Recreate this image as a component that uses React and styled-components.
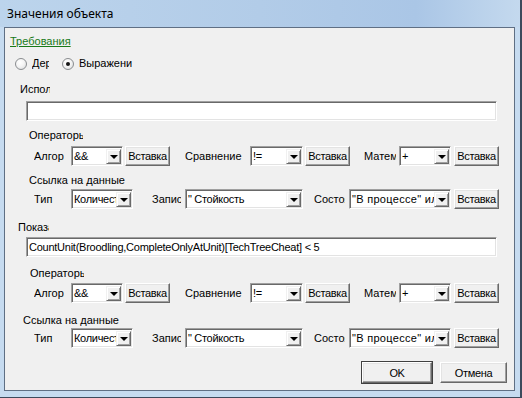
import React from "react";
import styled, { createGlobalStyle, css } from "styled-components";

const GlobalStyle = createGlobalStyle`
  html, body { margin: 0; padding: 0; background: #ffffff; }
  body {
    width: 522px; height: 398px; overflow: hidden;
    font-family: "Liberation Sans", Arial, sans-serif;
    font-size: 11px; color: #000;
  }
  * { box-sizing: border-box; }
`;

const Window = styled.div`
  width: 522px;
  height: 398px;
  display: flex;
  flex-direction: column;
  background: linear-gradient(90deg, #bcd4ec 0%, #b2cce8 50%, #aac6e6 80%, #c4d9ee 100%);
  border-right: 2px solid #3c4a5c;
  border-bottom: 1px solid #3c4a5c;
`;

const TitleBar = styled.div`
  height: 27px;
  flex: none;
  display: flex;
  align-items: center;
  padding-left: 7px;
  font-family: "Noto Sans", "Open Sans", sans-serif;
  font-size: 12px;
  color: #000;
`;

const FrameBody = styled.div`
  flex: 1;
  display: flex;
  padding: 0 5px 6px 4px;
  background: #c6dbf0;
`;

const Client = styled.div`
  flex: 1;
  background: #f0f0f0;
  border: 1px solid #5f6f84;
  display: flex;
  flex-direction: column;
`;

const Link = styled.a`
  align-self: flex-start;
  margin: 7px 0 0 5px;
  line-height: 13px;
  color: #187a18;
  text-decoration: underline;
  cursor: pointer;
`;

const RadioRow = styled.div`
  display: flex;
  align-items: center;
  height: 13px;
  margin: 9px 0 0 10px;
`;

const RadioOption = styled.label`
  display: flex;
  align-items: center;
  margin-right: ${(p) => p.$mr || 0}px;
`;

const RadioCircle = styled.span`
  width: 12px;
  height: 12px;
  border-radius: 50%;
  border: 1px solid #8a8d90;
  background: radial-gradient(circle at 40% 35%, #ffffff 0%, #f4f4f4 45%, #d6d8da 100%);
  display: flex;
  align-items: center;
  justify-content: center;
  margin-right: 5px;
  flex: none;
  ${(p) =>
    p.$checked &&
    css`
      &::after {
        content: "";
        width: 4px;
        height: 4px;
        border-radius: 50%;
        background: #151515;
      }
    `}
`;

const Clip = styled.span`
  display: block;
  width: ${(p) => p.$w}px;
  overflow: hidden;
  white-space: nowrap;
  line-height: 13px;
  flex: none;
`;

const SectionLabel = styled(Clip)`
  margin: ${(p) => p.$mt}px 0 0 ${(p) => p.$ml}px;
`;

const TextBox = styled.div`
  margin: ${(p) => p.$mt}px 0 0 21px;
  width: 471px;
  height: 20px;
  background: #fff;
  border-top: 1px solid #a0a0a0;
  border-left: 1px solid #a0a0a0;
  border-right: 1px solid #ffffff;
  border-bottom: 1px solid #ffffff;
  box-shadow: inset 1px 1px 0 #696969, inset -1px -1px 0 #e3e3e3;
  padding: 0 0 0 2px;
  display: flex;
  align-items: center;
  white-space: nowrap;
  overflow: hidden;
  letter-spacing: -0.25px;
`;

const Row = styled.div`
  display: flex;
  align-items: center;
  height: 20px;
  margin: ${(p) => p.$mt}px 0 0 29px;
`;

const RowLabel = styled(Clip)`
  margin-left: ${(p) => p.$ml || 0}px;
  margin-right: ${(p) => p.$mr}px;
`;

const Combo = styled.div`
  width: ${(p) => p.$w}px;
  height: 20px;
  flex: none;
  display: flex;
  background: #fff;
  border-top: 1px solid #a0a0a0;
  border-left: 1px solid #a0a0a0;
  border-right: 1px solid #ffffff;
  border-bottom: 1px solid #ffffff;
  box-shadow: inset 1px 1px 0 #696969, inset -1px -1px 0 #e3e3e3;
  padding: 2px 1px 1px 1px;
`;

const ComboText = styled.span`
  flex: 1;
  min-width: 0;
  overflow: hidden;
  white-space: nowrap;
  padding-left: 1px;
  line-height: 15px;
  letter-spacing: ${(p) => (p.$ls !== undefined ? p.$ls : -0.3)}px;
`;

const ComboButton = styled.span`
  width: 15px;
  flex: none;
  background: #f0f0f0;
  border-top: 1px solid #f0f0f0;
  border-left: 1px solid #f0f0f0;
  border-right: 1px solid #696969;
  border-bottom: 1px solid #696969;
  box-shadow: inset 1px 1px 0 #ffffff, inset -1px -1px 0 #a0a0a0;
  display: flex;
  align-items: center;
  justify-content: center;
  &::after {
    content: "";
    width: 0;
    height: 0;
    border-left: 4px solid transparent;
    border-right: 4px solid transparent;
    border-top: 4px solid #000;
    margin-top: 1px;
  }
`;

const Button = styled.button`
  width: ${(p) => p.$w || 45}px;
  height: ${(p) => p.$h || 20}px;
  margin-left: ${(p) => p.$ml || 0}px;
  flex: none;
  padding: 0;
  overflow: hidden;
  white-space: nowrap;
  font-family: "Liberation Sans", Arial, sans-serif;
  font-size: 11px;
  letter-spacing: -0.35px;
  color: #000;
  background: #f0f0f0;
  border-top: 1px solid #ffffff;
  border-left: 1px solid #ffffff;
  border-right: 1px solid #696969;
  border-bottom: 1px solid #696969;
  box-shadow: inset -1px -1px 0 #a0a0a0, inset 1px 1px 0 #e3e3e3;
  ${(p) =>
    p.$default &&
    css`
      outline: 1px solid #404040;
      outline-offset: 0;
    `}
`;

const Footer = styled.div`
  display: flex;
  justify-content: flex-end;
  gap: 8px;
  margin: 14px 7px 0 0;
`;

function ComboBox({ w, value, ls }) {
  return (
    <Combo $w={w}>
      <ComboText $ls={ls}>{value}</ComboText>
      <ComboButton />
    </Combo>
  );
}

function OperatorRow({ mt }) {
  return (
    <Row $mt={mt}>
      <RowLabel $w={30} $mr={7}>Алгоритм</RowLabel>
      <ComboBox w={52} value="&&" />
      <Button $ml={2}>Вставка</Button>
      <RowLabel $w={62} $ml={15} $mr={3}>Сравнение</RowLabel>
      <ComboBox w={53} value="!=" />
      <Button $ml={2}>Вставка</Button>
      <RowLabel $w={32} $ml={14} $mr={3}>Математика</RowLabel>
      <ComboBox w={52} value="+" />
      <Button $ml={3}>Вставка</Button>
    </Row>
  );
}

function DataRow({ mt }) {
  return (
    <Row $mt={mt}>
      <RowLabel $w={31} $mr={6}>Тип</RowLabel>
      <ComboBox w={62} value="Количество" />
      <RowLabel $w={29} $ml={19} $mr={4}>Запись</RowLabel>
      <ComboBox w={118} value={'" Стойкость'} />
      <RowLabel $w={31} $ml={11} $mr={4}>Состояние</RowLabel>
      <ComboBox w={102} ls={0.3} value={'"В процессе" или "Завершено"'} />
      <Button $ml={3}>Вставка</Button>
    </Row>
  );
}

export default function App() {
  return (
    <>
      <GlobalStyle />
      <Window>
        <TitleBar>Значения объекта</TitleBar>
        <FrameBody>
          <Client>
            <Link>Требования</Link>
            <RadioRow>
              <RadioOption $mr={13}>
                <RadioCircle />
                <Clip $w={17}>Дерево</Clip>
              </RadioOption>
              <RadioOption>
                <RadioCircle $checked />
                <Clip $w={53}>Выражение</Clip>
              </RadioOption>
            </RadioRow>
            <SectionLabel $w={30} $mt={13} $ml={15}>Использовать</SectionLabel>
            <TextBox $mt={5} />
            <SectionLabel $w={54} $mt={8} $ml={24}>Операторы</SectionLabel>
            <OperatorRow mt={4} />
            <SectionLabel $w={120} $mt={8} $ml={24}>Ссылка на данные</SectionLabel>
            <DataRow mt={2} />
            <SectionLabel $w={31} $mt={12} $ml={13}>Показать</SectionLabel>
            <TextBox $mt={3}>CountUnit(Broodling,CompleteOnlyAtUnit)[TechTreeCheat] &lt; 5</TextBox>
            <SectionLabel $w={54} $mt={10} $ml={25}>Операторы</SectionLabel>
            <OperatorRow mt={3} />
            <SectionLabel $w={120} $mt={11} $ml={18}>Ссылка на данные</SectionLabel>
            <DataRow mt={1} />
            <Footer>
              <Button $w={70} $h={21} $default>OK</Button>
              <Button $w={67} $h={21}>Отмена</Button>
            </Footer>
          </Client>
        </FrameBody>
      </Window>
    </>
  );
}
